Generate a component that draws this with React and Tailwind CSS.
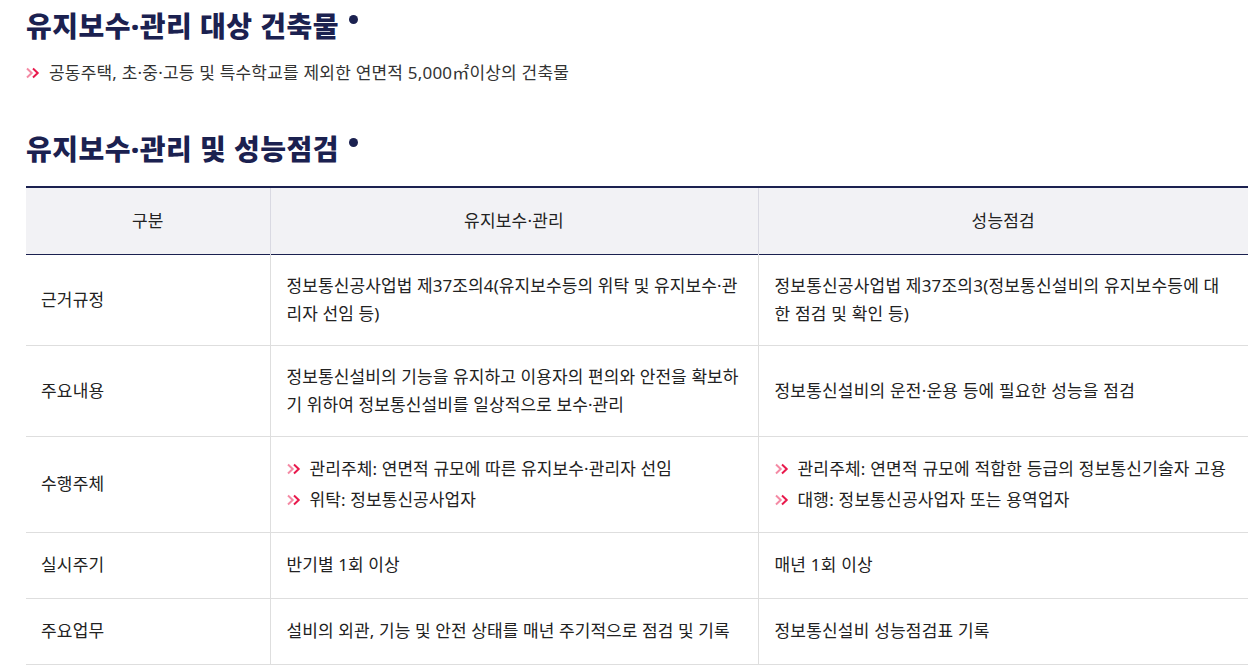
const FONT = { fontFamily: '"Noto Sans", "Noto Sans CJK KR", sans-serif' };

function Chevrons() {
  return (
    <svg width="14" height="12" viewBox="0 0 14 12" className="shrink-0">
      <path d="M1 1.5 L5.7 6 L1 10.5" fill="none" stroke="#f48aa4" strokeWidth="2" />
      <path d="M7 1.5 L11.7 6 L7 10.5" fill="none" stroke="#e8194c" strokeWidth="2" />
    </svg>
  );
}

function Bullet({ children }) {
  return (
    <li className="flex items-center gap-[9px]">
      <Chevrons />
      <span>{children}</span>
    </li>
  );
}

function Title({ children }) {
  return (
    <h2 className="flex items-start text-[28px] leading-[36px] font-black tracking-[0.5px] text-[#1b2150]">
      {children}
      <span className="ml-[10px] mt-[7px] w-[9px] h-[9px] rounded-full bg-[#1b2150]" />
    </h2>
  );
}

const rows = [
  {
    label: "근거규정",
    a: "정보통신공사업법 제37조의4(유지보수등의 위탁 및 유지보수·관리자 선임 등)",
    b: "정보통신공사업법 제37조의3(정보통신설비의 유지보수등에 대한 점검 및 확인 등)",
  },
  {
    label: "주요내용",
    a: "정보통신설비의 기능을 유지하고 이용자의 편의와 안전을 확보하기 위하여 정보통신설비를 일상적으로 보수·관리",
    b: "정보통신설비의 운전·운용 등에 필요한 성능을 점검",
  },
  {
    label: "수행주체",
    a: ["관리주체: 연면적 규모에 따른 유지보수·관리자 선임", "위탁: 정보통신공사업자"],
    b: ["관리주체: 연면적 규모에 적합한 등급의 정보통신기술자 고용", "대행: 정보통신공사업자 또는 용역업자"],
  },
  { label: "실시주기", a: "반기별 1회 이상", b: "매년 1회 이상" },
  {
    label: "주요업무",
    a: "설비의 외관, 기능 및 안전 상태를 매년 주기적으로 점검 및 기록",
    b: "정보통신설비 성능점검표 기록",
  },
];

function Cell({ value }) {
  if (Array.isArray(value)) {
    return (
      <ul className="flex flex-col gap-[3px] py-[1px]">
        {value.map((v) => (
          <Bullet key={v}>{v}</Bullet>
        ))}
      </ul>
    );
  }
  return <span className="break-all">{value}</span>;
}

export default function App() {
  return (
    <div style={FONT} className="bg-white min-h-screen px-[26px] pt-[8px] text-[#333] tracking-[0.2px]">
      <Title>유지보수·관리 대상 건축물</Title>
      <ul className="mt-[15px] text-[17px] leading-[28px]">
        <Bullet>공동주택, 초·중·고등 및 특수학교를 제외한 연면적 5,000㎡이상의 건축물</Bullet>
      </ul>

      <div className="mt-[44px]">
        <Title>유지보수·관리 및 성능점검</Title>
      </div>

      <table className="mt-[19px] w-[1222px] border-collapse table-fixed text-[17px] leading-[28px] text-[#222]">
        <colgroup>
          <col className="w-[244px]" />
          <col className="w-[488px]" />
          <col className="w-[490px]" />
        </colgroup>
        <thead>
          <tr className="bg-[#f2f2f5] border-t-2 border-b border-[#1b2150] h-[67px]">
            <th className="font-normal text-center">구분</th>
            <th className="font-normal text-center border-l border-[#d9d9e2]">유지보수·관리</th>
            <th className="font-normal text-center border-l border-[#d9d9e2]">성능점검</th>
          </tr>
        </thead>
        <tbody>
          {rows.map((r) => (
            <tr key={r.label} className="border-b border-[#dedede] h-[66px]">
              <td className="pl-[15px] pr-[16px] py-[17px] align-middle">{r.label}</td>
              <td className="pl-[16px] pr-[13px] py-[17px] align-middle tracking-[0.1px] border-l border-[#dedede]">
                <Cell value={r.a} />
              </td>
              <td className="pl-[16px] pr-[17px] py-[17px] align-middle border-l border-[#dedede]">
                <Cell value={r.b} />
              </td>
            </tr>
          ))}
        </tbody>
      </table>
    </div>
  );
}
